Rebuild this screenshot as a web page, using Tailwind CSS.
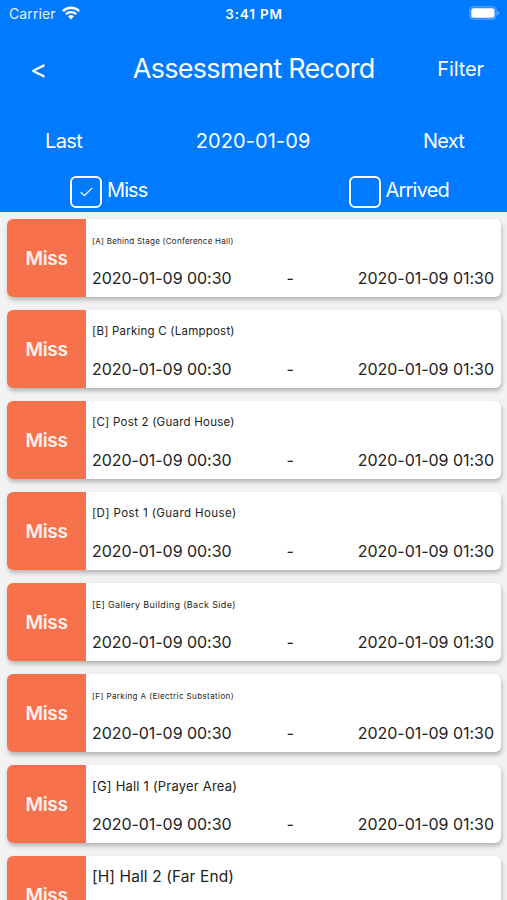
<!DOCTYPE html>
<html lang="en">
<head>
<meta charset="utf-8">
<meta name="viewport" content="width=device-width, initial-scale=1">
<title>Assessment Record</title>
<script src="https://cdn.jsdelivr.net/npm/@tailwindcss/browser@4"></script>
</head>
<body class="h-[900px] overflow-hidden bg-[#f2f2f2] font-['Inter','Liberation_Sans',sans-serif] text-[#222]">
<header class="flex h-[212px] flex-col bg-[#007aff] text-white">
  <div class="grid h-[28px] grid-cols-3 items-center pr-[8px] pl-[9px] text-[13.5px] leading-none whitespace-nowrap">
    <div class="flex items-center gap-[6px]">
      <span class="text-[14px] tracking-[0.1px] text-white/90">Carrier</span>
      <svg class="mb-[2px] h-[14px] w-[18px]" viewBox="0 0 18 14" fill="none" stroke="white" stroke-width="2.3">
        <path d="M.9 5.1a11.5 11.5 0 0 1 16.2 0"/><path d="M3.8 8.2a7.4 7.4 0 0 1 10.4 0"/><path d="M9 13.5 6.1 10.5a4.1 4.1 0 0 1 5.8 0z" fill="white" stroke="none"/>
      </svg>
    </div>
    <span class="pt-[1px] text-center font-semibold tracking-[0.8px]">3:41 PM</span>
    <svg class="mb-[2px] h-[14px] w-[30px] justify-self-end" viewBox="0 0 30 14">
      <rect x=".6" y=".6" width="26.8" height="12.8" rx="4" fill="white" fill-opacity=".15" stroke="white" stroke-opacity=".25"/>
      <rect x="2.3" y="2.2" width="23.2" height="9.6" rx="2.4" fill="white"/>
      <path d="M28.6 4.8q1.4.7 1.4 2.2t-1.4 2.2z" fill="white" fill-opacity=".5"/>
    </svg>
  </div>
  <div class="flex h-[82px] items-center justify-between pr-[23px] pl-[30px] whitespace-nowrap">
    <span class="w-[46px] pt-[1px] text-[26px] leading-none">&lt;</span>
    <h1 class="mr-[6px] pb-[1px] text-[27px] leading-none tracking-[-0.71px]">Assessment Record</h1>
    <span class="text-[20px] leading-none tracking-[-0.1px]">Filter</span>
  </div>
  <div class="flex h-[62px] items-center justify-between pr-[43px] pl-[45px] text-[20px] leading-none whitespace-nowrap">
    <span class="tracking-[-0.6px]">Last</span>
    <span class="ml-[1px] tracking-[0.1px]">2020-01-09</span>
    <span class="tracking-[-0.8px]">Next</span>
  </div>
  <div class="flex justify-between pr-[58px] pl-[70px] pt-[4px] text-[20px] leading-none whitespace-nowrap">
    <div class="flex gap-[5px]">
      <span class="flex size-[32px] items-center justify-center rounded-[6px] border-2 border-white">
        <svg class="h-[10px] w-[13px]" viewBox="0 0 13 10" fill="none" stroke="white" stroke-width="1.3"><path d="M.8 5.2 4.4 8.7 12.2.9"/></svg>
      </span>
      <span class="pt-[4px] tracking-[-0.9px]">Miss</span>
    </div>
    <div class="flex gap-[5px]">
      <span class="size-[32px] rounded-[6px] border-2 border-white"></span>
      <span class="pt-[4px] tracking-[-0.8px]">Arrived</span>
    </div>
  </div>
</header>
<main id="records" class="flex flex-col gap-[13px] pt-[7px] pr-[6px] pl-[7px]"></main>
<template id="record">
  <article class="flex h-[78px] shrink-0 rounded-[6px] bg-white shadow-[1px_3px_4px_rgba(0,0,0,0.25)]">
    <div class="flex w-[79px] shrink-0 items-center justify-center rounded-l-[6px] bg-[#f7724c] text-[19px] leading-none font-semibold tracking-[-0.3px] text-white/90">Miss</div>
    <div class="flex min-w-0 flex-1 flex-col pr-[7px] pl-[6px] leading-none whitespace-nowrap">
      <div class="flex h-[43px] items-center"><span data-name></span></div>
      <div class="flex h-[32px] items-center justify-between text-[16px]">
        <span class="tracking-[-0.05px]">2020-01-09 00:30</span><span class="pr-[9px]">-</span><span class="tracking-[-0.03px]">2020-01-09 01:30</span>
      </div>
    </div>
  </article>
</template>
<script>
const records = [
  ["[A] Behind Stage (Conference Hall)", "pt-[1px] text-[8px] tracking-[0.26px]"],
  ["[B] Parking C (Lamppost)", "pt-[1px] text-[11.5px] tracking-[0.22px]"],
  ["[C] Post 2 (Guard House)", "pt-[1px] text-[11.5px] tracking-[0.24px]"],
  ["[D] Post 1 (Guard House)", "pt-[1px] text-[11.5px] tracking-[0.42px]"],
  ["[E] Gallery Building (Back Side)", "text-[9px] tracking-[0.36px]"],
  ["[F] Parking A (Electric Substation)", "pt-[1px] text-[8px] tracking-[0.4px]"],
  ["[G] Hall 1 (Prayer Area)", "text-[13px] tracking-[0.2px]"],
  ["[H] Hall 2 (Far End)", "pb-[2px] text-[15.5px] tracking-[0.1px]"]
];
const list = document.getElementById("records");
for (const [name, style] of records) {
  const row = document.getElementById("record").content.cloneNode(true);
  const label = row.querySelector("[data-name]");
  label.textContent = name;
  label.className = style;
  list.append(row);
}
</script>
</body>
</html>
